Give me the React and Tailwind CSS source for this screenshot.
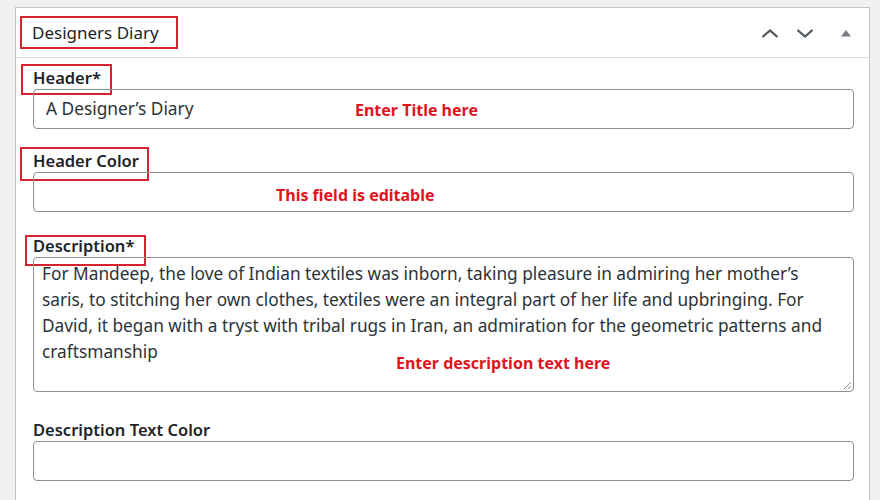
import React from 'react';

const redBox = 'absolute border-2 border-[#d8232f] pointer-events-none';
const note = 'absolute text-[16px] font-bold text-[#e0141e] whitespace-nowrap';

const Field = ({ label, children, box }) => (
  <div className="relative">
    <div className="h-5 text-[16.5px] leading-5 font-semibold text-[#1d2327]">{label}</div>
    {box && <span className={redBox} style={box} />}
    {children}
  </div>
);

const App = () => {
  const description =
    'For Mandeep, the love of Indian textiles was inborn, taking pleasure in admiring her mother\u2019s saris, to stitching her own clothes, textiles were an integral part of her life and upbringing. For David, it began with a tryst with tribal rugs in Iran, an admiration for the geometric patterns and craftsmanship';

  return (
    <div className="h-[500px] w-[880px] overflow-hidden bg-[#f0f0f1] pl-[15px] pt-[7px] font-['Noto_Sans',sans-serif]">
      <div className="h-[600px] w-[855px] border border-[#c3c4c7] bg-white">
        <div className="relative flex h-[50px] items-center justify-between border-b border-[#dcdcde] pl-[16px] pr-[13px]">
          <h2 className="text-[17px] text-[#1d2327]">Designers Diary</h2>
          <span className="absolute left-[4px] top-[8px] h-[33px] w-[158px] border-2 border-[#d8232f]" />
          <div className="flex items-center text-[#50575e]">
            <svg width="18" height="18" viewBox="0 0 18 18" fill="none" stroke="currentColor" strokeWidth="2.3">
              <path d="M1.5 13l7.5-6.5 7.5 6.5" />
            </svg>
            <svg width="18" height="18" viewBox="0 0 18 18" className="ml-[17px]" fill="none" stroke="currentColor" strokeWidth="2.3">
              <path d="M1.5 6l7.5 6.5 7.5-6.5" />
            </svg>
            <svg width="20" height="20" viewBox="0 0 20 20" className="ml-[22px]" fill="#787c82">
              <path d="M5 13.5l5-6.5 5 6.5z" />
            </svg>
          </div>
        </div>

        <div className="flex flex-col pl-[17px] pr-[15px] pt-[10px]">
          <Field label="Header*" box={{ left: -12, top: -4, width: 91, height: 31 }}>
            <div className="relative mt-[1px] flex h-[40px] items-center rounded-[4px] border border-[#8c8f94] px-[12px] text-[17.3px] text-[#2c3338]">
              A Designer&rsquo;s Diary
              <span className={note} style={{ left: 321, top: 8 }}>Enter Title here</span>
            </div>
          </Field>

          <div className="mt-[22px]">
            <Field label="Header Color" box={{ left: -13, top: -4, width: 129, height: 34 }}>
              <div className="relative mt-[1px] h-[40px] rounded-[4px] border border-[#8c8f94]">
                <span className={note} style={{ left: 242, top: 10 }}>This field is editable</span>
              </div>
            </Field>
          </div>

          <div className="mt-[24px]">
            <Field label="Description*" box={{ left: -8, top: -1, width: 121, height: 31 }}>
              <div className="relative mt-[1px] h-[135px] rounded-[4px] border border-[#8c8f94] pl-[8px] pr-[12px] pt-[3px] text-[17.3px] leading-[26px] text-[#2c3338]">
                {description}
                <span className={note} style={{ left: 362, top: 92 }}>Enter description text here</span>
                <svg className="absolute bottom-[1px] right-[1px]" width="10" height="10" viewBox="0 0 10 10" stroke="#8c8f94" strokeWidth="1">
                  <path d="M9 2L2 9M9 6L6 9" />
                </svg>
              </div>
            </Field>
          </div>

          <div className="mt-[28px]">
            <Field label="Description Text Color">
              <div className="mt-[1px] h-[40px] rounded-[4px] border border-[#8c8f94]" />
            </Field>
          </div>
        </div>
      </div>
    </div>
  );
};

export default App;
